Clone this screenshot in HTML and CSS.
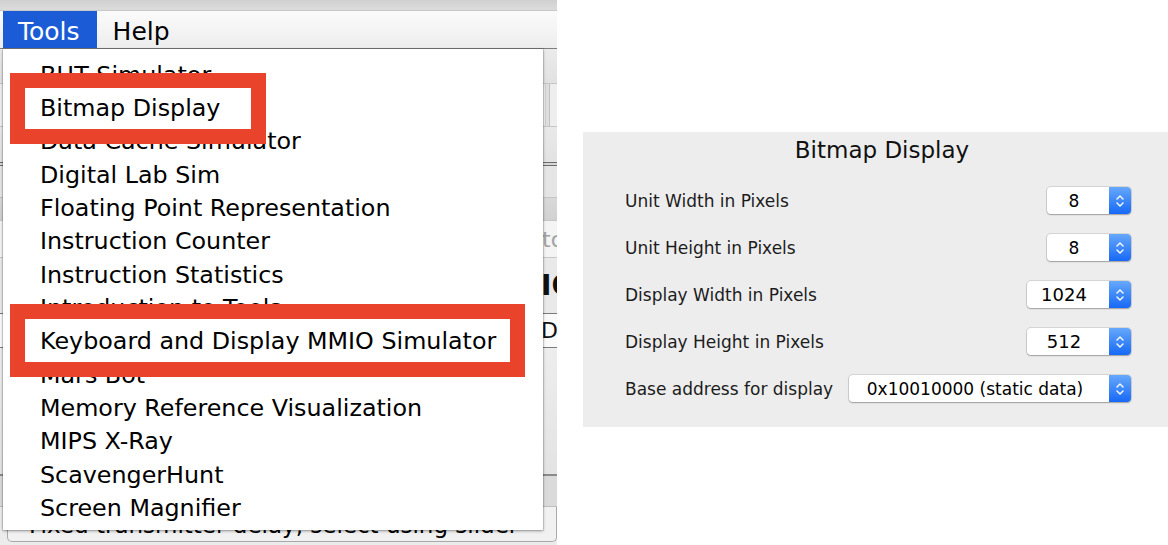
FILE: index.html
```html
<!DOCTYPE html>
<html>
<head>
<meta charset="utf-8">
<link rel="stylesheet" href="styles.css">
</head>
<body>
<div class="page">
  <div class="shot">
    <div class="topstrip"></div>
    <div class="menubar">
      <span class="mb-item active">Tools</span>
      <span class="mb-item">Help</span>
    </div>
    <div class="win">
      <div class="w-a"></div>
      <div class="w-tool"><div class="w-divider"></div></div>
      <div class="w-b"></div>
      <div class="w-dbl"></div>
      <div class="w-c"></div>
      <div class="w-d"></div>
      <div class="w-field"><span class="hint">to</span></div>
      <div class="w-head">IO</div>
      <div class="w-field2">Do</div>
      <div class="w-e"></div>
      <div class="w-line"></div>
      <div class="w-box"></div>
      <div class="w-bottom">
        <div class="slider-box">Fixed transmitter delay, select using slider</div>
      </div>
    </div>

    <div class="menu">
      <div class="menu-item">BHT Simulator</div>
      <div class="menu-item">Bitmap Display</div>
      <div class="menu-item">Data Cache Simulator</div>
      <div class="menu-item">Digital Lab Sim</div>
      <div class="menu-item">Floating Point Representation</div>
      <div class="menu-item">Instruction Counter</div>
      <div class="menu-item">Instruction Statistics</div>
      <div class="menu-item">Introduction to Tools</div>
      <div class="menu-item">Keyboard and Display MMIO Simulator</div>
      <div class="menu-item">Mars Bot</div>
      <div class="menu-item">Memory Reference Visualization</div>
      <div class="menu-item">MIPS X-Ray</div>
      <div class="menu-item">ScavengerHunt</div>
      <div class="menu-item">Screen Magnifier</div>
    </div>

    <div class="mark mark1"></div>
    <div class="mark mark2"></div>
  </div>

  <div class="panel">
    <div class="panel-title">Bitmap Display</div>
    <div class="row">
      <span class="label">Unit Width in Pixels</span>
      <div class="spin w84">
        <div class="spin-val">8</div>
        <div class="spin-btn"><svg width="10" height="18" viewBox="0 0 10 18"><path d="M2 7 L5 4 L8 7 M2 11 L5 14 L8 11" fill="none" stroke="#fff" stroke-width="1.4" stroke-linecap="round" stroke-linejoin="round"/></svg></div>
      </div>
    </div>
    <div class="row">
      <span class="label">Unit Height in Pixels</span>
      <div class="spin w84">
        <div class="spin-val">8</div>
        <div class="spin-btn"><svg width="10" height="18" viewBox="0 0 10 18"><path d="M2 7 L5 4 L8 7 M2 11 L5 14 L8 11" fill="none" stroke="#fff" stroke-width="1.4" stroke-linecap="round" stroke-linejoin="round"/></svg></div>
      </div>
    </div>
    <div class="row">
      <span class="label">Display Width in Pixels</span>
      <div class="spin w104">
        <div class="spin-val num">1024</div>
        <div class="spin-btn"><svg width="10" height="18" viewBox="0 0 10 18"><path d="M2 7 L5 4 L8 7 M2 11 L5 14 L8 11" fill="none" stroke="#fff" stroke-width="1.4" stroke-linecap="round" stroke-linejoin="round"/></svg></div>
      </div>
    </div>
    <div class="row">
      <span class="label">Display Height in Pixels</span>
      <div class="spin w104">
        <div class="spin-val num">512</div>
        <div class="spin-btn"><svg width="10" height="18" viewBox="0 0 10 18"><path d="M2 7 L5 4 L8 7 M2 11 L5 14 L8 11" fill="none" stroke="#fff" stroke-width="1.4" stroke-linecap="round" stroke-linejoin="round"/></svg></div>
      </div>
    </div>
    <div class="row">
      <span class="label">Base address for display</span>
      <div class="spin w282">
        <div class="spin-val">0x10010000 (static data)</div>
        <div class="spin-btn"><svg width="10" height="18" viewBox="0 0 10 18"><path d="M2 7 L5 4 L8 7 M2 11 L5 14 L8 11" fill="none" stroke="#fff" stroke-width="1.4" stroke-linecap="round" stroke-linejoin="round"/></svg></div>
      </div>
    </div>
  </div>
</div>
</body>
</html>
```

FILE: styles.css
```css
* { box-sizing: border-box; }
html, body { margin: 0; padding: 0; background: #fff; }
body { font-family: "DejaVu Sans", "Liberation Sans", sans-serif; color: #000; }

.page { display: flex; width: 1168px; height: 545px; overflow: hidden; }

/* ---------- left screenshot ---------- */
.shot {
  position: relative;
  width: 557px;
  height: 545px;
  flex: none;
  display: flex;
  flex-direction: column;
  background: #e6e6e6;
  overflow: hidden;
}
.topstrip {
  height: 11px;
  flex: none;
  background: linear-gradient(#d0d0d0, #dcdcdc);
  border-bottom: 1px solid #c8c8c8;
}
.menubar {
  height: 38px;
  flex: none;
  display: flex;
  padding-left: 3px;
  background: linear-gradient(#fbfbfb, #ededed);
  border-bottom: 1px solid #7e7e7e;
  font-size: 25px;
}
.mb-item { display: flex; align-items: center; padding: 3px 16px 0 16px; color: #000; }
.mb-item.active { background: #1b5cd6; color: #fff; padding-left: 15px; padding-right: 17px; }

.win { flex: 1; display: flex; flex-direction: column; }
.w-a { height: 34px; flex: none; background: linear-gradient(#ebebeb, #e1e1e1); }
.w-tool {
  height: 44px; flex: none;
  background: #eeeeee;
  border-top: 1px solid #c6c6c6;
  border-bottom: 1px solid #c6c6c6;
  padding-left: 545px;
}
.w-divider { width: 5px; height: 100%; border-left: 1px solid #d0d0d0; border-right: 1px solid #c2c2c2; background: #dedede; }
.w-b { height: 35px; flex: none; background: linear-gradient(#e9e9e9, #e2e2e2); }
.w-dbl { height: 4px; flex: none; border-top: 1px solid #6c6c6c; border-bottom: 1px solid #6c6c6c; background: #d6d6d6; }
.w-c { height: 31px; flex: none; background: #e5e5e5; }
.w-d { height: 23px; flex: none; border-top: 1px solid #c4c4c4; background: linear-gradient(#d9d9d9, #d1d1d1); }
.w-field {
  height: 38px; flex: none;
  background: #f4f4f4;
  border-top: 1px solid #c8c8c8;
  border-bottom: 1px solid #c8c8c8;
  padding-left: 542px;
  display: flex; align-items: center;
  font-size: 22px; color: #a3a3a3;
}
.w-head {
  height: 55px; flex: none;
  background: #e9e9e9;
  padding-left: 541px;
  display: flex; align-items: center;
  font-size: 28px; font-weight: bold; color: #111;
}
.w-field2 {
  height: 35px; flex: none;
  background: #fafafa;
  border-top: 1px solid #7a7a7a;
  border-bottom: 1px solid #7a7a7a;
  padding-left: 541px;
  display: flex; align-items: center;
  font-size: 22px; color: #111;
}
.w-e { height: 126px; flex: none; background: linear-gradient(#ededed, #e3e3e3); }
.w-line { height: 2px; flex: none; background: #8a8a8a; }
.w-box { height: 31px; flex: none; background: #dadada; border-bottom: 1px solid #bdbdbd; }
.w-bottom { flex: 1; background: #ececec; }
.slider-box {
  margin-left: 7px;
  height: 35px;
  border: 1px solid #a9a9a9;
  border-top: none;
  border-radius: 0 0 5px 5px;
  background: #f1f1f1;
  padding: 5px 0 0 21px;
  font-size: 23px;
  white-space: nowrap;
}

/* menu popup (overlay) */
.menu {
  position: absolute;
  left: 3px;
  top: 49px;
  width: 540px;
  height: 481px;
  background: #fff;
  box-shadow: 0 1px 3px rgba(0,0,0,.35), 0 0 0 1px rgba(0,0,0,.10);
  padding: 9px 0 0 37px;
  font-size: 23.8px;
}
.menu-item {
  height: 33.333px;
  display: flex;
  align-items: center;
  white-space: nowrap;
  color: #000;
}

/* red annotation boxes (overlay) */
.mark {
  position: absolute;
  border: 15px solid #e9432b;
}
.mark1 { left: 10px; top: 73px; width: 256px; height: 71px; }
.mark2 { left: 10px; top: 304px; width: 515px; height: 73px; }

/* ---------- right dialog panel ---------- */
.panel {
  flex: none;
  width: 585px;
  height: 295px;
  margin: 132px 0 0 26px;
  background: #ededed;
  padding: 0 37px 0 42px;
  display: flex;
  flex-direction: column;
}
.panel-title {
  height: 44px;
  line-height: 36px;
  text-align: center;
  padding-left: 8px;
  font-size: 23px;
  color: #111;
}
.row {
  height: 47px;
  padding-top: 2px;
  display: flex;
  align-items: center;
  justify-content: space-between;
}
.label { font-size: 17px; color: #1c1c1c; white-space: nowrap; }
.spin {
  height: 27px;
  display: flex;
  border-radius: 4px;
  background: #fff;
  box-shadow: 0 0 0 1px rgba(0,0,0,.10), 0 1px 1.5px rgba(0,0,0,.25);
}
.w84 { width: 84px; }
.w104 { width: 104px; }
.w282 { width: 282px; }
.spin-val {
  flex: 1;
  display: flex;
  align-items: center;
  justify-content: center;
  padding-right: 8px;
  font-size: 17px;
  color: #000;
  white-space: nowrap;
}
.spin-val.num { font-size: 18px; }
.spin-btn {
  width: 22px;
  flex: none;
  border-radius: 0 4px 4px 0;
  background: linear-gradient(#66a8fb, #1769f6);
  display: flex;
  align-items: center;
  justify-content: center;
}
```
